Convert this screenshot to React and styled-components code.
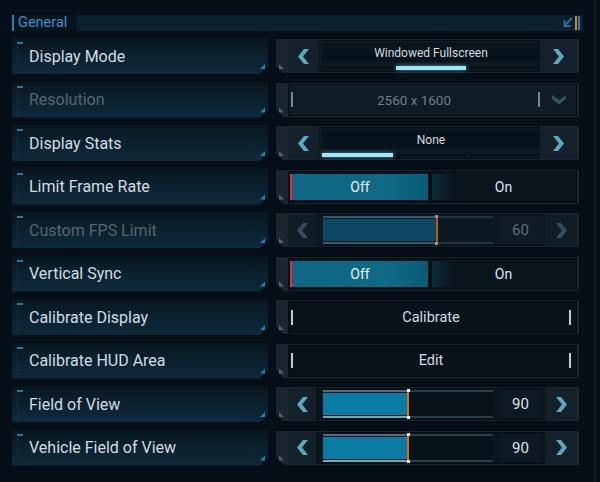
import React from "react";
import styled, { createGlobalStyle } from "styled-components";

const GlobalStyle = createGlobalStyle`
  html, body {
    margin: 0;
    background: #050d15;
  }
  body {
    font-family: Roboto, "Liberation Sans", sans-serif;
  }
`;

const rows = [
  { label: "Display Mode", type: "select", value: "Windowed Fullscreen", seg: 1 },
  { label: "Resolution", type: "dropdown", value: "2560 x 1600", disabled: true },
  { label: "Display Stats", type: "select", value: "None", seg: 0 },
  { label: "Limit Frame Rate", type: "toggle" },
  { label: "Custom FPS Limit", type: "slider", value: 60, pct: 67, disabled: true },
  { label: "Vertical Sync", type: "toggle" },
  { label: "Calibrate Display", type: "button", value: "Calibrate" },
  { label: "Calibrate HUD Area", type: "button", value: "Edit" },
  { label: "Field of View", type: "slider", value: 90, pct: 50 },
  { label: "Vehicle Field of View", type: "slider", value: 90, pct: 50 },
];

const Chevron = ({ dir = "left", disabled }) => {
  const color = disabled ? "#34505e" : "#5da8c1";
  if (dir === "down") {
    return (
      <svg width="14" height="10" viewBox="0 0 14 10">
        <polygon points="0,0 7,5 14,0 14,4 7,9.5 0,4" fill="#35525f" />
      </svg>
    );
  }
  return (
    <svg
      width="11"
      height="15"
      viewBox="0 0 11 15"
      style={dir === "right" ? { transform: "scaleX(-1)" } : undefined}
    >
      <polygon points="6,0 11,0 5,7.5 11,15 6,15 0,7.5" fill={color} />
    </svg>
  );
};

const Settings = () => (
  <Page>
    <GlobalStyle />
    <Main>
      <Header>
        <HeaderTitle>General</HeaderTitle>
        <HeaderBar>
          <svg width="20" height="14" viewBox="0 0 20 14">
            <path d="M10 2 L3 9 M2.5 4 L2.5 10 L8.5 10" stroke="#2a6c9a" strokeWidth="2" fill="none" />
            <rect x="13" y="0" width="2" height="14" fill="#d9822b" />
            <rect x="16" y="0" width="2" height="14" fill="#2b7fb0" />
          </svg>
        </HeaderBar>
      </Header>
      <List>
        {rows.map((row) => (
          <Row key={row.label}>
            <Label $disabled={row.disabled}>
              <TopTick />
              <DotLine />
              {row.label}
              <CornerMark />
            </Label>
            <Control>
              <FoldMark />
              {row.type === "select" && <Select row={row} />}
              {row.type === "dropdown" && <Dropdown row={row} />}
              {row.type === "toggle" && <Toggle />}
              {row.type === "slider" && <Slider row={row} />}
              {row.type === "button" && <ActionButton row={row} />}
            </Control>
          </Row>
        ))}
      </List>
    </Main>
    <ScrollTrack />
  </Page>
);

const Select = ({ row }) => (
  <Inner>
    <ArrowBox $w={30}>
      <Chevron dir="left" />
    </ArrowBox>
    <SelectCenter>
      <ValueWell>{row.value}</ValueWell>
      <Segments>
        {[0, 1, 2].map((i) => (
          <Seg key={i} $on={i === row.seg} />
        ))}
      </Segments>
    </SelectCenter>
    <ArrowBox $w={37}>
      <Chevron dir="right" />
    </ArrowBox>
  </Inner>
);

const Dropdown = ({ row }) => (
  <Inner $bg="#101c25">
    <Bar $dim />
    <Centered $color="#717d84" $size={13.5}>{row.value}</Centered>
    <Bar $dim />
    <DropArrow>
      <Chevron dir="down" />
    </DropArrow>
  </Inner>
);

const Toggle = () => (
  <Inner $bg="#09141c" $pad="3px 2px">
    <OffPart>Off</OffPart>
    <Divider />
    <OnPart>On</OnPart>
  </Inner>
);

const Slider = ({ row }) => (
  <Inner $bg={row.disabled ? "#0e1a23" : "#0b151d"}>
    <ArrowBox $w={28} $dim={row.disabled}>
      <Chevron dir="left" disabled={row.disabled} />
    </ArrowBox>
    <Track>
      <TrackLine style={{ "--pct": `${row.pct}%` }} $dim={row.disabled} />
      <TrackFill style={{ "--pct": `${row.pct}%` }} $dim={row.disabled} />
      <TrackLine style={{ "--pct": `${row.pct}%` }} $dim={row.disabled} $bottom />
      <Marker style={{ left: `${row.pct}%` }} $dim={row.disabled} />
    </Track>
    <ValueBox $dim={row.disabled}>{row.value}</ValueBox>
    <ArrowBox $w={32} $grow $dim={row.disabled}>
      <Chevron dir="right" disabled={row.disabled} />
    </ArrowBox>
  </Inner>
);

const ActionButton = ({ row }) => (
  <Inner $bg="#08121a">
    <Bar />
    <Centered $color="#d4dce1" $size={14.5}>{row.value}</Centered>
    <Bar $far />
  </Inner>
);

const Page = styled.div`
  width: 600px;
  height: 482px;
  display: flex;
  overflow: hidden;
  background: #060f17;
`;

const Main = styled.div`
  width: 571px;
  padding: 15px 0 0 12px;
`;

const ScrollTrack = styled.div`
  width: 1px;
  margin-left: 12px;
  background: #17252f;
`;

const Header = styled.div`
  display: flex;
  height: 16px;
  margin-bottom: 7px;
`;

const HeaderTitle = styled.div`
  width: 59px;
  border-left: 2px solid #2d7fb0;
  padding-left: 4px;
  background: #071520;
  color: #3f90c8;
  font-size: 14.5px;
  line-height: 16px;
`;

const HeaderBar = styled.div`
  flex: 1;
  display: flex;
  align-items: center;
  justify-content: flex-end;
  padding-right: 1px;
  background: #0b2030;
`;

const List = styled.div`
  display: flex;
  flex-direction: column;
  gap: 7.5px;
`;

const Row = styled.div`
  display: grid;
  grid-template-columns: 256px 305px;
  column-gap: 7px;
  height: 36px;
`;

const Label = styled.div`
  position: relative;
  display: flex;
  align-items: center;
  padding-left: 17px;
  font-size: 16px;
  color: ${(p) => (p.$disabled ? "#5a656d" : "#d3dce2")};
  background: linear-gradient(180deg, #08171f 0%, #0b2230 55%, #0f2a3a 100%);
  clip-path: polygon(0 0, 100% 0, 100% calc(100% - 8px), calc(100% - 8px) 100%, 0 100%);
`;

const TopTick = styled.span`
  position: absolute;
  left: 5px;
  top: 4px;
  width: 6px;
  height: 2px;
  background: #2a78a2;
`;

const DotLine = styled.span`
  position: absolute;
  left: 5px;
  top: 9px;
  bottom: 5px;
  width: 1px;
  background: repeating-linear-gradient(180deg, #1b4a62 0 1px, transparent 1px 3px);
`;

const CornerMark = styled.span`
  position: absolute;
  right: 3px;
  bottom: 5px;
  width: 5px;
  height: 5px;
  background: #2b7ea8;
  clip-path: polygon(100% 0, 100% 100%, 0 100%);
`;

const Control = styled.div`
  position: relative;
  display: flex;
  padding: 2px 3px 2px 13px;
  background: #1a2630;
  box-shadow: inset 0 0 0 1px #03090e;
  clip-path: polygon(0 0, 100% 0, 100% 100%, 9px 100%, 0 calc(100% - 9px));
`;

const FoldMark = styled.span`
  position: absolute;
  left: 4px;
  bottom: 5px;
  width: 5px;
  height: 5px;
  background: #56636b;
  clip-path: polygon(0 0, 100% 100%, 0 100%);
`;

const Inner = styled.div`
  flex: 1;
  display: flex;
  align-items: stretch;
  padding: ${(p) => p.$pad || "0"};
  background: ${(p) => p.$bg || "#0e1a23"};
  box-shadow: inset 0 0 0 1px #050c12;
`;

const ArrowBox = styled.div`
  ${(p) => (p.$grow ? "flex: 1;" : `width: ${p.$w}px;`)}
  margin-left: ${(p) => (p.$grow ? "5px" : "0")};
  display: flex;
  align-items: center;
  justify-content: center;
  background: ${(p) => (p.$dim ? "#111d26" : "#14212b")};
`;

const SelectCenter = styled.div`
  flex: 1;
  display: flex;
  flex-direction: column;
  gap: 4px;
  margin-left: 4px;
  padding: 3px 0 2px;
`;

const ValueWell = styled.div`
  flex: 1;
  display: flex;
  align-items: center;
  justify-content: center;
  background: #09131b;
  color: #d3dbe0;
  font-size: 12px;
`;

const Segments = styled.div`
  display: flex;
  gap: 3px;
  height: 4px;
`;

const Seg = styled.div`
  flex: 1;
  background: ${(p) => (p.$on ? "#9fe6f8" : "#09131b")};
  box-shadow: ${(p) => (p.$on ? "0 0 4px rgba(120, 220, 250, 0.6)" : "none")};
`;

const Bar = styled.span`
  width: 2px;
  height: 15px;
  align-self: center;
  margin-left: ${(p) => (p.$far ? "0" : "3px")};
  margin-right: ${(p) => (p.$far ? "6px" : "0")};
  background: ${(p) => (p.$dim ? "#7a858b" : "#c3ccd1")};
`;

const Centered = styled.div`
  flex: 1;
  display: flex;
  align-items: center;
  justify-content: center;
  color: ${(p) => p.$color};
  font-size: ${(p) => p.$size}px;
`;

const DropArrow = styled.div`
  width: 37px;
  display: flex;
  align-items: center;
  justify-content: center;
`;

const OffPart = styled.div`
  width: 136px;
  display: flex;
  align-items: center;
  justify-content: center;
  border-left: 2px solid #e42b46;
  background: linear-gradient(90deg, #0f6781 0%, #0f6a86 70%, #0c5a73 100%);
  color: #e8eef1;
  font-size: 14px;
`;

const Divider = styled.span`
  width: 2px;
  margin: 0 1px;
  background: #03080c;
`;

const OnPart = styled.div`
  flex: 1;
  display: flex;
  align-items: center;
  justify-content: center;
  background: linear-gradient(90deg, #0d2c3a 0%, #09141c 22px);
  color: #dfe6ea;
  font-size: 14px;
`;

const Track = styled.div`
  position: relative;
  width: 170px;
  margin: 2px 0 2px 7px;
  display: flex;
  flex-direction: column;
  gap: 1px;
`;

const TrackLine = styled.div`
  height: 2px;
  background: linear-gradient(
    90deg,
    ${(p) => (p.$dim ? "#3a5766" : p.$bottom ? "#7ba3b6" : "#4d6b7b")} 0 var(--pct),
    ${(p) => (p.$dim ? "#22333d" : "#2a3d49")} var(--pct) 100%
  );
`;

const TrackFill = styled.div`
  flex: 1;
  background: linear-gradient(
    90deg,
    ${(p) => (p.$dim ? "#0b4762" : "#0a7ba3")} 0 var(--pct),
    ${(p) => (p.$dim ? "#0d1922" : "#08121a")} var(--pct) 100%
  );
`;

const Marker = styled.span`
  position: absolute;
  top: 0;
  bottom: 0;
  width: 2px;
  margin-left: -1px;
  background: ${(p) => (p.$dim ? "#b0591a" : "#e06d12")};

  &::before,
  &::after {
    content: "";
    position: absolute;
    left: -0.5px;
    width: 3px;
    height: 3px;
    background: ${(p) => (p.$dim ? "#8c969b" : "#f2f4f5")};
  }
  &::before {
    top: -1px;
  }
  &::after {
    bottom: -1px;
  }
`;

const ValueBox = styled.div`
  width: 39px;
  margin: 2px 0 2px 8px;
  display: flex;
  align-items: center;
  justify-content: center;
  background: ${(p) => (p.$dim ? "#0f1b24" : "#0e1a23")};
  color: ${(p) => (p.$dim ? "#5f6c74" : "#dce3e7")};
  font-size: 15px;
`;

export default function App() {
  return <Settings />;
}
